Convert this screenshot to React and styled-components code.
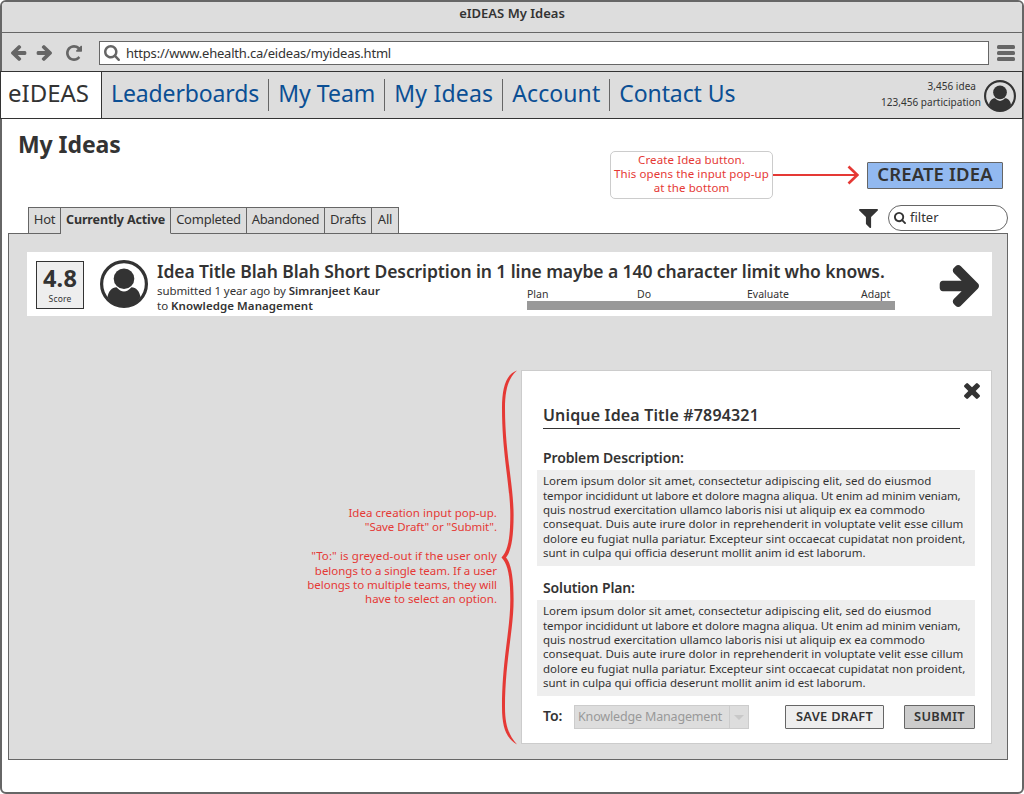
import React from "react";
import styled, { createGlobalStyle } from "styled-components";

const ink = "#333333";
const line = "#666666";
const panel = "#dddddd";
const red = "#e53935";

const GlobalStyle = createGlobalStyle`
  *, *::before, *::after { box-sizing: border-box; }
  body { margin: 0; background: #fff; }
  h1, h2, h3, p { margin: 0; }
  button, input { font: inherit; color: inherit; }
  svg { display: block; flex: none; }
`;

const Browser = styled.div`
  width: 1024px;
  height: 794px;
  border: 2px solid ${line};
  border-radius: 6px;
  background: #fff;
  color: ${ink};
  font-family: "Noto Sans", sans-serif;
  white-space: nowrap;
`;

/* Text run with optional fine tracking */
const Run = styled.span`
  letter-spacing: ${(p) => p.$track || 0}px;
  font-weight: ${(p) => p.$weight || "inherit"};
`;

const TitleBar = styled.div`
  height: 31px;
  border-bottom: 1px solid ${line};
  border-radius: 4px 4px 0 0;
  background: ${panel};
  text-align: center;
  font-size: 13px;
  font-weight: 600;
  line-height: 22px;
`;

const Toolbar = styled.div`
  display: flex;
  align-items: flex-start;
  height: 38px;
  padding: 8px 7px 0 9px;
  background: ${panel};
  color: ${line};
`;

const ToolIcons = styled.div`
  display: flex;
  gap: 9px;
  width: 88px;
  padding-top: 4px;
  svg:last-child { margin-left: 5px; }
`;

const AddressBar = styled.div`
  display: flex;
  align-items: center;
  gap: 6px;
  width: 890px;
  height: 24px;
  padding-left: 4px;
  border: 1px solid ${line};
  background: #fff;
  font-size: 13px;
  line-height: 22px;
  letter-spacing: -0.2px;
`;

const AddressText = styled.span`
  color: ${ink};
`;

const MenuButton = styled.div`
  padding: 4px 0 0 8px;
`;

const Nav = styled.nav`
  display: flex;
  align-items: flex-start;
  height: 48px;
  margin: 0 -1px 0 -2px;
  border: 1px solid ${ink};
  background: ${panel};
  font-size: 23px;
`;

const Brand = styled.div`
  width: 101px;
  height: 46px;
  padding-left: 7px;
  border-right: 1px solid ${ink};
  background: #fff;
  font-size: 24px;
  line-height: 42px;
`;

const NavLink = styled.a`
  height: 32px;
  margin-top: 7px;
  padding: 0 9px;
  border-right: 1px solid ${(p) => (p.$last ? "transparent" : line)};
  color: #0b4f94;
  line-height: 28px;
  letter-spacing: ${(p) => p.$track}px;
`;

const Stats = styled.div`
  margin: 6px 3px 0 auto;
  font-size: 10px;
  line-height: 16px;
  letter-spacing: 0.04px;
  text-align: right;
`;

const Stat = styled.div`
  padding-right: ${(p) => p.$inset || 0}px;
`;

const NavAvatar = styled.div`
  margin: 8px 6px 0 0;
`;

const PageTop = styled.div`
  display: flex;
  align-items: flex-start;
  height: 86px;
  padding: 0 19px 0 16px;
`;

const PageTitle = styled.h1`
  margin: 11px auto 0 0;
  font-size: 23px;
  font-weight: 700;
  line-height: 28px;
  letter-spacing: -0.08px;
`;

const Callout = styled.p`
  width: 163px;
  height: 48px;
  margin-top: 32px;
  padding-top: 0.6px;
  border: 1px solid #cccccc;
  border-radius: 5px;
  color: ${red};
  font-size: 11.5px;
  line-height: 14.4px;
  letter-spacing: 0.1px;
  text-align: center;
`;

const Pointer = styled.svg`
  margin: 46px 8px 0 0;
`;

const CreateButton = styled.button`
  width: 136px;
  height: 27px;
  margin-top: 43px;
  padding: 0 0 4px;
  border: 1px solid ${line};
  border-radius: 1px;
  background: #92b9f0;
  font-size: 18.5px;
  font-weight: 600;
  line-height: 21px;
  letter-spacing: 0.15px;
`;

const TabRow = styled.div`
  display: flex;
  justify-content: space-between;
  height: 28px;
  margin: 0 14px 0 6px;
`;

const Tabs = styled.div`
  position: relative;
  display: flex;
  margin: 2px 0 -1px 20px;
  border-left: 1px solid ${line};
`;

const Tab = styled.div`
  width: ${(p) => p.$w}px;
  height: 27px;
  border: 1px solid ${line};
  border-left: 0;
  border-bottom-color: ${(p) => (p.$active ? panel : line)};
  background: ${panel};
  font-size: ${(p) => (p.$active ? 12.5 : 13)}px;
  font-weight: ${(p) => (p.$active ? 700 : 400)};
  line-height: ${(p) => (p.$active ? 24 : 22)}px;
  letter-spacing: ${(p) => p.$track}px;
  text-align: center;
`;

const FilterGroup = styled.div`
  display: flex;
  align-items: flex-start;
  gap: 10px;
  > svg { margin-top: 4px; }
`;

const FilterField = styled.div`
  display: flex;
  gap: 4px;
  width: 120px;
  height: 26px;
  padding-left: 5px;
  border: 1px solid ${line};
  border-radius: 13px;
  font-size: 13px;
  line-height: 22px;
  svg { margin-top: 6px; }
`;

const Board = styled.main`
  width: 1000px;
  height: 527px;
  margin-left: 6px;
  padding: 18px 15px 0 18px;
  border: 1px solid ${line};
  background: ${panel};
`;

const IdeaCard = styled.article`
  display: flex;
  align-items: flex-start;
  height: 64px;
  padding: 8px 13px 0 9px;
  background: #fff;
`;

const Score = styled.div`
  width: 48px;
  height: 48px;
  margin: 1px 16px 0 0;
  border: 1px solid ${ink};
  background: #eeeeee;
  text-align: center;
`;

const ScoreValue = styled.div`
  font-size: 23.5px;
  font-weight: 700;
  line-height: 33px;
  letter-spacing: 0.2px;
`;

const ScoreLabel = styled.div`
  font-size: 8.5px;
  line-height: 8px;
  letter-spacing: 0.15px;
`;

const IdeaBody = styled.div`
  width: 738px;
  margin-left: 9px;
`;

const IdeaTitle = styled.h2`
  font-size: 17.5px;
  font-weight: 600;
  line-height: 22px;
  letter-spacing: -0.09px;
`;

const IdeaDetails = styled.div`
  display: flex;
`;

const Meta = styled.div`
  width: 370px;
  padding-top: 1px;
  font-size: 11.5px;
  line-height: 15px;
`;

const Progress = styled.div`
  width: 368px;
  padding-top: 5px;
`;

const Stages = styled.div`
  display: grid;
  grid-template-columns: 110px 110px 114px auto;
  font-size: 10.5px;
  line-height: 14px;
`;

const ProgressBar = styled.div`
  height: 9px;
  background: #999999;
`;

const OpenIdea = styled.div`
  margin: 5px 0 0 auto;
`;

const Lower = styled.section`
  display: flex;
  justify-content: flex-end;
  align-items: flex-start;
  margin-top: 54px;
`;

const Note = styled.div`
  width: 220px;
  margin: 136px 2px 0 0;
  color: ${red};
  font-size: 11.5px;
  line-height: 14.4px;
  text-align: right;
  p + p { margin-top: 14.4px; }
`;

const Popup = styled.section`
  width: 471px;
  height: 374px;
  margin-left: 2px;
  padding: 12px 0 0 15px;
  border: 1px solid #cccccc;
  background: #fff;
`;

const CloseRow = styled.div`
  display: flex;
  justify-content: flex-end;
  padding-right: 11px;
`;

const PopupTitle = styled.h2`
  height: 25px;
  margin: 5px 31px 0 6px;
  border-bottom: 1px solid ${ink};
  font-size: 16px;
  font-weight: 600;
  line-height: 22px;
  letter-spacing: 0.16px;
`;

const FieldLabel = styled.h3`
  margin: ${(p) => p.$top}px 0 2px 6px;
  font-size: 14px;
  font-weight: 600;
  line-height: 20px;
  letter-spacing: -0.13px;
`;

const FieldText = styled.p`
  width: 438px;
  height: 96px;
  padding: 4.2px 6px 0;
  background: #eeeeee;
  font-size: 11.5px;
  line-height: 14.4px;
`;

const PopupFooter = styled.div`
  display: flex;
  margin: 9px 16px 0 6px;
  line-height: 22px;
`;

const ToLabel = styled.span`
  width: 31px;
  font-size: 14px;
  font-weight: 600;
`;

const TeamSelect = styled.div`
  display: flex;
  width: 175px;
  height: 24px;
  margin-right: auto;
  border: 1px solid #cccccc;
  background: ${panel};
  color: #999999;
  font-size: 12.5px;
  letter-spacing: -0.16px;
`;

const TeamName = styled.span`
  width: 155px;
  padding-left: 3px;
  border-right: 1px solid #cccccc;
`;

const Caret = styled.span`
  align-self: center;
  margin: 1px 0 0 4px;
  border: 5px solid transparent;
  border-top-color: #c8c8c8;
  border-bottom: 0;
`;

const ActionButton = styled.button`
  width: ${(p) => p.$w}px;
  height: 24px;
  margin-left: ${(p) => p.$gap || 0}px;
  padding: 0 0 1px;
  border: 1px solid ${line};
  border-radius: 1px;
  background: ${(p) => (p.$primary ? "#cccccc" : "#eeeeee")};
  font-size: 12.8px;
  font-weight: 600;
  line-height: 21px;
  letter-spacing: 0.32px;
`;

const icons = {
  arrow: {
    box: "64 181 1536 1558",
    d: "M1600 960q0 54-37 91l-651 651q-39 37-91 37-51 0-90-37l-75-75q-38-38-38-91t38-91l293-293h-704q-52 0-84.5-37.5t-32.5-90.5v-128q0-53 32.5-90.5t84.5-37.5h704l-293-294q-38-36-38-90t38-90l75-75q38-38 90-38 53 0 91 38l651 651q37 35 37 90z",
  },
  reload: {
    box: "128 128 1536 1536",
    d: "M1664 256v448q0 26-19 45t-45 19h-448q-42 0-59-40-17-39 14-69l138-138q-148-137-349-137-104 0-198.5 40.5t-163.5 109.5-109.5 163.5-40.5 198.5 40.5 198.5 109.5 163.5 163.5 109.5 198.5 40.5q119 0 225-52t179-147q7-10 23-12 15 0 25 9l137 138q9 8 9.5 20.5t-7.5 22.5q-109 132-264 204.5t-327 72.5q-156 0-298-61t-245-164-164-245-61-298 61-298 164-245 245-164 298-61q147 0 284.5 55.5t244.5 156.5l130-129q29-31 70-14 39 17 39 59z",
  },
  search: {
    box: "64 128 1664 1664",
    d: "M1216 832q0-185-131.5-316.5t-316.5-131.5-316.5 131.5-131.5 316.5 131.5 316.5 316.5 131.5 316.5-131.5 131.5-316.5zm512 832q0 52-38 90t-90 38q-54 0-90-38l-343-342q-179 124-399 124-143 0-273.5-55.5t-225-150-150-225-55.5-273.5 55.5-273.5 150-225 225-150 273.5-55.5 273.5 55.5 225 150 150 225 55.5 273.5q0 220-124 399l343 343q37 37 37 90z",
  },
  filter: {
    box: "190 256 1410 1408",
    d: "M1595 295q17 41-14 70l-493 493v742q0 42-39 59-13 5-25 5-27 0-45-19l-256-256q-19-19-19-45v-486l-493-493q-31-29-14-70 17-39 59-39h1280q42 0 59 39z",
  },
  close: {
    box: "302 366 1188 1188",
    d: "M1490 1322q0 40-28 68l-136 136q-28 28-68 28t-68-28l-294-294-294 294q-28 28-68 28t-68-28l-136-136q-28-28-28-68t28-68l294-294-294-294q-28-28-28-68t28-68l136-136q28-28 68-28t68 28l294 294 294-294q28-28 68-28t68 28l136 136q28 28 28 68t-28 68l-294 294 294 294q28 28 28 68z",
  },
};

const Icon = ({ name, w, h, flip, color = "currentColor" }) => (
  <svg width={w} height={h || w} viewBox={icons[name].box} fill={color} preserveAspectRatio="none">
    <path d={icons[name].d} transform={flip ? "translate(1664 0) scale(-1 1)" : undefined} />
  </svg>
);

const Avatar = ({ size, back }) => (
  <svg width={size} height={size} viewBox="0 0 48 48">
    <circle cx="24" cy="24" r="22.5" fill={back} />
    <path d="M7.5 37C8.5 31 12 27.2 16.5 27.2Q24 35.6 31.5 27.2C36 27.2 39.5 31 40.5 37Q34 46.5 24 46.5T7.5 37Z" fill={ink} />
    <circle cx="24" cy="18.7" r="10.3" fill={ink} />
    <circle cx="24" cy="24" r="22.4" fill="none" stroke={ink} strokeWidth="3.2" />
  </svg>
);

const Brace = () => (
  <svg width="20" height="375" viewBox="0 0 20 375" fill={red}>
    <path d="M18 0.5C7 4 3 18 3 38C3 85 11.3 115 11.3 145C11.3 168 9 181 2.5 187.5C9 194 11.3 207 11.3 230C11.3 260 3 290 3 337C3 357 7 368 18 374.5C10 366 6 355 6 337C6 292 14.6 260 14.6 230C14.6 207 12 193 7 187.5C12 182 14.6 168 14.6 145C14.6 115 6 83 6 38C6 19 10 7 18 0.5Z" />
  </svg>
);

const links = [
  { label: "Leaderboards", track: -0.13 },
  { label: "My Team", track: 0 },
  { label: "My Ideas", track: 0.2 },
  { label: "Account", track: 0.08 },
  { label: "Contact Us", track: -0.1 },
];

const tabs = [
  { label: "Hot", w: 32, track: -0.3 },
  { label: "Currently Active", w: 110, track: -0.13, active: true },
  { label: "Completed", w: 76, track: -0.25 },
  { label: "Abandoned", w: 78, track: -0.4 },
  { label: "Drafts", w: 47, track: -0.25 },
  { label: "All", w: 27, track: -0.2 },
];

const stages = ["Plan", "Do", "Evaluate", "Adapt"];

const lorem = [
  ["Lorem ipsum dolor sit amet, consectetur adipiscing elit, sed do eiusmod", 0],
  ["tempor incididunt ut labore et dolore magna aliqua. Ut enim ad minim veniam,", -0.11],
  ["quis nostrud exercitation ullamco laboris nisi ut aliquip ex ea commodo", -0.04],
  ["consequat. Duis aute irure dolor in reprehenderit in voluptate velit esse cillum", 0],
  ["dolore eu fugiat nulla pariatur. Excepteur sint occaecat cupidatat non proident,", -0.02],
  ["sunt in culpa qui officia deserunt mollit anim id est laborum.", -0.04],
];

const LoremText = () => (
  <FieldText>
    {lorem.map(([text, track]) => (
      <React.Fragment key={text}>
        <Run $track={track}>{text}</Run>
        <br />
      </React.Fragment>
    ))}
  </FieldText>
);

export default function App() {
  return (
    <>
      <GlobalStyle />
      <Browser>
        <TitleBar>eIDEAS My Ideas</TitleBar>
        <Toolbar>
          <ToolIcons>
            <Icon name="arrow" w={16} flip />
            <Icon name="arrow" w={16} />
            <Icon name="reload" w={16} />
          </ToolIcons>
          <AddressBar>
            <Icon name="search" w={16} />
            <AddressText>https://www.ehealth.ca/eideas/myideas.html</AddressText>
          </AddressBar>
          <MenuButton>
            <svg width="18" height="16" viewBox="0 0 18 16" fill={line}>
              <rect width="18" height="4" rx="1.5" />
              <rect y="6" width="18" height="4" rx="1.5" />
              <rect y="12" width="18" height="4" rx="1.5" />
            </svg>
          </MenuButton>
        </Toolbar>
        <Nav>
          <Brand>eIDEAS</Brand>
          {links.map((l, i) => (
            <NavLink key={l.label} $track={l.track} $last={i === links.length - 1}>
              {l.label}
            </NavLink>
          ))}
          <Stats>
            <Stat $inset={5}>3,456 idea</Stat>
            <Stat>123,456 participation</Stat>
          </Stats>
          <NavAvatar>
            <Avatar size={32} back={panel} />
          </NavAvatar>
        </Nav>

        <PageTop>
          <PageTitle>My Ideas</PageTitle>
          <Callout>
            Create Idea button.
            <br />
            This opens the input pop-up
            <br />
            at the bottom
          </Callout>
          <Pointer width="86" height="20" viewBox="0 0 86 20" fill="none" stroke={red}>
            <path d="M0 10H84" strokeWidth="2" />
            <path d="M75.5 1.5L84.3 10L75.5 18.5" strokeWidth="2.6" />
          </Pointer>
          <CreateButton>CREATE IDEA</CreateButton>
        </PageTop>

        <TabRow>
          <Tabs>
            {tabs.map((t) => (
              <Tab key={t.label} $w={t.w} $track={t.track} $active={t.active}>
                {t.label}
              </Tab>
            ))}
          </Tabs>
          <FilterGroup>
            <Icon name="filter" w={19} />
            <FilterField>
              <Icon name="search" w={12} />
              filter
            </FilterField>
          </FilterGroup>
        </TabRow>

        <Board>
          <IdeaCard>
            <Score>
              <ScoreValue>4.8</ScoreValue>
              <ScoreLabel>Score</ScoreLabel>
            </Score>
            <Avatar size={48} back="#fff" />
            <IdeaBody>
              <IdeaTitle>
                Idea Title Blah Blah Short Description in 1 line maybe a 140 character limit who knows.
              </IdeaTitle>
              <IdeaDetails>
                <Meta>
                  <div>
                    <Run $track={-0.08}>submitted 1 year ago by </Run>
                    <Run $weight={600} $track={0.07}>
                      Simranjeet Kaur
                    </Run>
                  </div>
                  <div>
                    to{" "}
                    <Run $weight={600} $track={0.07}>
                      Knowledge Management
                    </Run>
                  </div>
                </Meta>
                <Progress>
                  <Stages>
                    {stages.map((s) => (
                      <span key={s}>{s}</span>
                    ))}
                  </Stages>
                  <ProgressBar />
                </Progress>
              </IdeaDetails>
            </IdeaBody>
            <OpenIdea>
              <Icon name="arrow" w={41} h={42} />
            </OpenIdea>
          </IdeaCard>

          <Lower>
            <Note>
              <p>
                <Run $track={0.04}>Idea creation input pop-up.</Run>
                <br />
                <Run $track={-0.07}>"Save Draft" or "Submit".</Run>
              </p>
              <p>
                <Run $track={0.1}>"To:" is greyed-out if the user only</Run>
                <br />
                <Run $track={-0.02}>belongs to a single team. If a user</Run>
                <br />
                <Run $track={-0.05}>belongs to multiple teams, they will</Run>
                <br />
                have to select an option.
              </p>
            </Note>
            <Brace />
            <Popup>
              <CloseRow>
                <Icon name="close" w={16} />
              </CloseRow>
              <PopupTitle>Unique Idea Title #7894321</PopupTitle>
              <FieldLabel $top={19}>Problem Description:</FieldLabel>
              <LoremText />
              <FieldLabel $top={12}>Solution Plan:</FieldLabel>
              <LoremText />
              <PopupFooter>
                <ToLabel>To:</ToLabel>
                <TeamSelect>
                  <TeamName>Knowledge Management</TeamName>
                  <Caret />
                </TeamSelect>
                <ActionButton $w={99}>SAVE DRAFT</ActionButton>
                <ActionButton $w={71} $gap={20} $primary>
                  SUBMIT
                </ActionButton>
              </PopupFooter>
            </Popup>
          </Lower>
        </Board>
      </Browser>
    </>
  );
}
